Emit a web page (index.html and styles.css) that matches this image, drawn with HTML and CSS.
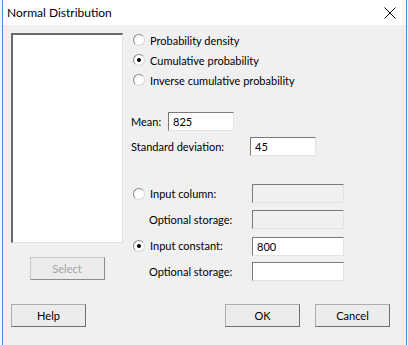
FILE: index.html
```html
<!DOCTYPE html>
<html lang="en">

<head>
    <meta charset="UTF-8">
    <meta name="viewport" content="width=device-width, initial-scale=1.0">
    <title>Normal Distribution</title>
    <link rel="stylesheet" href="styles.css">
</head>

<body>
    <div class="window">
        <!-- Barra de titulo -->
        <div class="titlebar">
            <span class="title">Normal Distribution</span>
            <svg class="close" width="12" height="12" viewBox="0 0 12 12">
                <path d="M0.5 0.5 L11.5 11.5 M11.5 0.5 L0.5 11.5" stroke="#000" stroke-width="1" fill="none" />
            </svg>
        </div>

        <div class="dialog">
            <div class="main">
                <!-- Lista de columnas -->
                <div class="left">
                    <div class="listbox"></div>
                    <button class="btn" disabled>Select</button>
                </div>

                <div class="right">
                    <div class="options">
                        <div class="radio-row"><span class="radio"></span>Probability density</div>
                        <div class="radio-row"><span class="radio checked"></span>Cumulative probability</div>
                        <div class="radio-row"><span class="radio"></span>Inverse cumulative probability</div>
                    </div>

                    <div class="field mean-row">
                        <span class="mean-label">Mean:</span>
                        <input class="textbox short" type="text" value="825">
                    </div>
                    <div class="field sd-row">
                        <span>Standard deviation:</span>
                        <input class="textbox short" type="text" value="45">
                    </div>

                    <div class="inputs">
                        <div class="radio-row"><span class="radio"></span>Input column:</div>
                        <input class="textbox disabled" type="text" disabled>

                        <div class="sub-label">Optional storage:</div>
                        <input class="textbox disabled" type="text" disabled>

                        <div class="radio-row"><span class="radio checked"></span>Input constant:</div>
                        <input class="textbox" type="text" value="800">

                        <div class="sub-label">Optional storage:</div>
                        <input class="textbox" type="text">
                    </div>
                </div>
            </div>

            <div class="footer">
                <button class="btn">Help</button>
                <div class="spacer"></div>
                <button class="btn">OK</button>
                <button class="btn">Cancel</button>
            </div>
        </div>
    </div>
</body>

</html>
```

FILE: styles.css
```css
:root {
    --face: #f0f0f0;
    --accent: #4a8fd6;
    --text: #000000;
    --dark-edge: #7a7a7a;
    --light-edge: #e3e3e3;
}

body {
    margin: 0;
    background-color: #f4f4f4;
    font-family: 'Lato', 'Open Sans', sans-serif;
    font-size: 11px;
    color: var(--text);
    height: 345px;
    overflow: hidden;
}

.window {
    margin-left: 2px;
    width: 403px;
    height: 345px;
    border-left: 1px solid var(--accent);
    border-right: 1px solid var(--accent);
    background-color: var(--face);
}

.titlebar {
    height: 25px;
    background-color: #ffffff;
    display: flex;
    align-items: center;
    justify-content: space-between;
    padding: 0 10px 0 4px;
}

.title {
    font-size: 12px;
    margin-top: -1px;
}

.close {
    display: block;
}

.main {
    display: flex;
    gap: 8px;
    padding-left: 8px;
}

.left {
    display: flex;
    flex-direction: column;
    align-items: center;
    width: 112px;
}

.listbox {
    margin-top: 8px;
    width: 112px;
    height: 210px;
    box-sizing: border-box;
    background-color: #ffffff;
    border-top: 2px solid #696969;
    border-left: 2px solid #696969;
    border-right: 1px solid #e3e3e3;
    border-bottom: 1px solid #e3e3e3;
}

.btn {
    width: 75px;
    height: 23px;
    box-sizing: border-box;
    font-family: inherit;
    font-size: 11px;
    color: var(--text);
    background-color: #ececec;
    border: 1px solid #adadad;
    border-right-color: #6f6f6f;
    border-bottom-color: #6f6f6f;
    padding: 0;
}

.btn:disabled {
    color: #a3a3a3;
    border-color: #c9c9c9;
    border-right-color: #8c8c8c;
    border-bottom-color: #8c8c8c;
}

.left .btn {
    margin-top: 14px;
}

.right {
    padding-top: 5px;
}

.radio-row {
    display: flex;
    align-items: center;
    height: 20px;
    padding-left: 2px;
    gap: 5px;
}

.radio {
    width: 12px;
    height: 12px;
    box-sizing: border-box;
    border-radius: 50%;
    border: 1px solid #8a8a8a;
    border-right-color: #d8d8d8;
    border-bottom-color: #d8d8d8;
    background-color: #ffffff;
    display: flex;
    align-items: center;
    justify-content: center;
}

.radio.checked::after {
    content: "";
    width: 4px;
    height: 4px;
    border-radius: 50%;
    background-color: #000000;
}

.field {
    display: flex;
    align-items: center;
}

.mean-row {
    margin-top: 22px;
}

.mean-label {
    width: 37px;
}

.sd-row {
    margin-top: 6px;
    justify-content: space-between;
    width: 185px;
}

.textbox {
    box-sizing: border-box;
    width: 92px;
    height: 19px;
    margin: 0;
    padding: 0 4px;
    font-family: inherit;
    font-size: 11px;
    color: var(--text);
    background-color: #ffffff;
    border-top: 1px solid var(--dark-edge);
    border-left: 1px solid var(--dark-edge);
    border-right: 1px solid var(--light-edge);
    border-bottom: 1px solid var(--light-edge);
    outline: none;
}

.textbox.short {
    width: 66px;
}

.textbox.disabled {
    background-color: #f0f0f0;
}

.inputs {
    margin-top: 28px;
    display: grid;
    grid-template-columns: 121px 92px;
    grid-template-rows: 19px 19px 19px 19px;
    row-gap: 7px;
    align-items: center;
}

.inputs .textbox:nth-of-type(3) {
    margin-top: 2px;
}

.inputs .radio-row {
    height: 19px;
}

.sub-label {
    padding-left: 18px;
}

.footer {
    display: flex;
    margin-top: 23px;
    padding: 0 16px 0 8px;
    gap: 15px;
}

.spacer {
    flex: 1;
}
```
